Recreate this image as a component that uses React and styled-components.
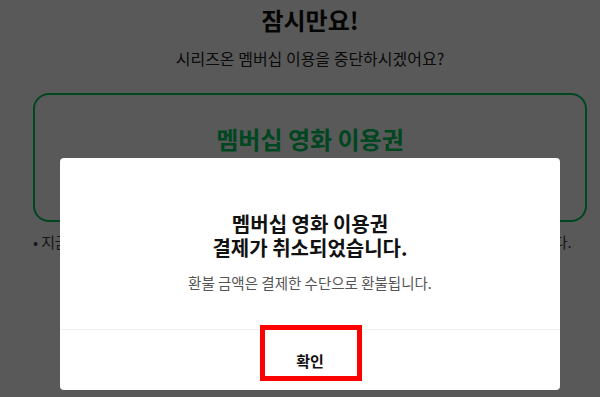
import styled, { createGlobalStyle } from 'styled-components';

const GlobalStyle = createGlobalStyle`
  html, body {
    margin: 0;
    padding: 0;
    background: #ffffff;
    font-family: "Noto Sans CJK KR", "Noto Sans", sans-serif;
    overflow: hidden;
  }
`;

const Page = styled.div`
  display: flex;
  flex-direction: column;
  align-items: center;
  width: 100%;
  height: 397px;
  overflow: hidden;
  padding: 5px 0 0 20px;
  box-sizing: border-box;
`;

const Title = styled.h1`
  margin: 0;
  font-size: 24px;
  line-height: 30px;
  font-weight: 700;
  color: #111111;
`;

const Subtitle = styled.p`
  margin: 12px 0 0;
  font-size: 16px;
  line-height: 22px;
  color: #222222;
`;

const PlanCard = styled.div`
  align-self: stretch;
  margin: 24px 13px 0;
  height: 129px;
  box-sizing: border-box;
  border: 2px solid #00c85e;
  border-radius: 16px;
  display: flex;
  justify-content: center;
  padding-top: 27px;
`;

const PlanName = styled.h2`
  margin: 0;
  font-size: 24px;
  line-height: 34px;
  font-weight: 700;
  color: #00c85e;
`;

const Notice = styled.p`
  align-self: stretch;
  margin: 9px 0 0 13px;
  font-size: 15px;
  line-height: 22px;
  letter-spacing: -0.16px;
  color: #444444;
  white-space: nowrap;
`;

const Overlay = styled.div`
  position: fixed;
  inset: 0;
  background: rgba(0, 0, 0, 0.65);
  display: flex;
  justify-content: center;
  align-items: flex-end;
  padding: 0 0 7px 20px;
`;

const Modal = styled.div`
  width: 500px;
  background: #ffffff;
  border-radius: 4px;
  display: flex;
  flex-direction: column;
`;

const ModalBody = styled.div`
  display: flex;
  flex-direction: column;
  align-items: center;
  padding: 54px 20px 36px;
  border-bottom: 1px solid #f1f1f1;
`;

const ModalTitle = styled.h3`
  margin: 0;
  font-size: 20px;
  line-height: 24px;
  font-weight: 700;
  color: #111111;
  text-align: center;
`;

const ModalText = styled.p`
  margin: 13px 0 0;
  font-size: 14.5px;
  line-height: 20px;
  color: #555555;
`;

const ModalFooter = styled.div`
  position: relative;
  height: 60px;
  display: flex;
  justify-content: center;
  align-items: center;
`;

const ConfirmButton = styled.button`
  border: 0;
  background: none;
  padding: 0;
  font-family: inherit;
  font-size: 15px;
  font-weight: 700;
  color: #111111;
  cursor: pointer;
`;

const Highlight = styled.span`
  position: absolute;
  left: 200px;
  top: -5px;
  width: 102px;
  height: 56px;
  box-sizing: border-box;
  border: 5px solid #ff0000;
  pointer-events: none;
`;

const App = () => {
  return (
    <>
      <GlobalStyle />
      <Page>
        <Title>잠시만요!</Title>
        <Subtitle>시리즈온 멤버십 이용을 중단하시겠어요?</Subtitle>
        <PlanCard>
          <PlanName>멤버십 영화 이용권</PlanName>
        </PlanCard>
        <Notice>• 지금 해지하셔도 다음 결제일 전까지는 멤버십 혜택을 그대로 계속 이용하실 수 있습니다.</Notice>
      </Page>

      <Overlay>
        <Modal>
          <ModalBody>
            <ModalTitle>
              멤버십 영화 이용권
              <br />
              결제가 취소되었습니다.
            </ModalTitle>
            <ModalText>환불 금액은 결제한 수단으로 환불됩니다.</ModalText>
          </ModalBody>
          <ModalFooter>
            <ConfirmButton>확인</ConfirmButton>
            <Highlight />
          </ModalFooter>
        </Modal>
      </Overlay>
    </>
  );
};

export default App;
